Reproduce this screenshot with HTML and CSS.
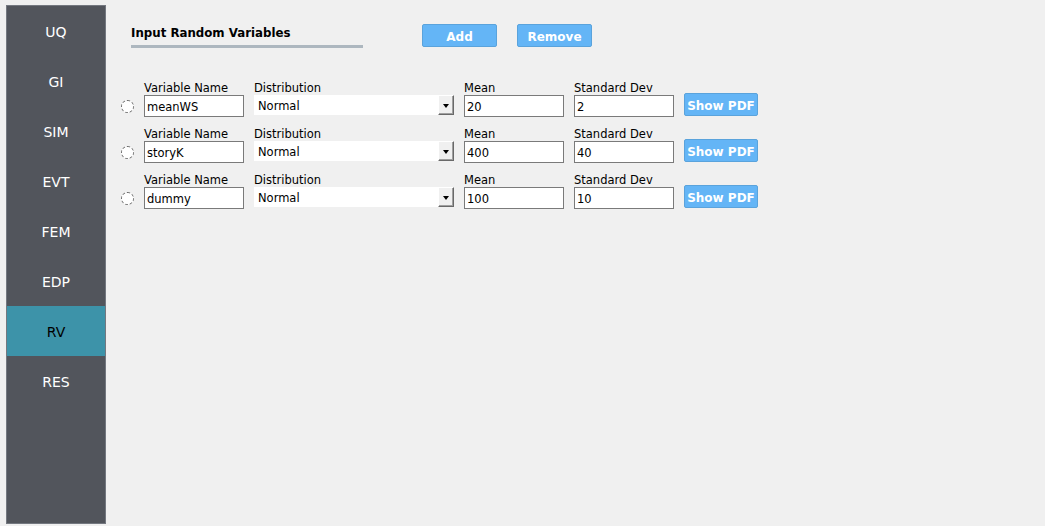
FILE: index.html
```html
<!DOCTYPE html>
<html>
<head>
<meta charset="utf-8">
<link rel="stylesheet" href="styles.css">
</head>
<body>
<nav class="sidebar">
  <div class="nav-item">UQ</div>
  <div class="nav-item">GI</div>
  <div class="nav-item">SIM</div>
  <div class="nav-item">EVT</div>
  <div class="nav-item">FEM</div>
  <div class="nav-item">EDP</div>
  <div class="nav-item active">RV</div>
  <div class="nav-item">RES</div>
</nav>
<main class="main">
  <div class="header">
    <div class="title">Input Random Variables</div>
    <button class="btn btn-add">Add</button>
    <button class="btn btn-remove">Remove</button>
  </div>
  <div class="rows">
    <div class="row">
      <span class="radio"></span>
      <label class="field f-name"><span class="lbl">Variable Name</span><span class="input">meanWS</span></label>
      <label class="field f-dist"><span class="lbl">Distribution</span><span class="combo"><span class="combo-text">Normal</span><span class="combo-btn"><span class="arrow"></span></span></span></label>
      <label class="field f-num"><span class="lbl">Mean</span><span class="input">20</span></label>
      <label class="field f-num"><span class="lbl">Standard Dev</span><span class="input">2</span></label>
      <button class="btn btn-pdf">Show PDF</button>
    </div>
    <div class="row">
      <span class="radio"></span>
      <label class="field f-name"><span class="lbl">Variable Name</span><span class="input">storyK</span></label>
      <label class="field f-dist"><span class="lbl">Distribution</span><span class="combo"><span class="combo-text">Normal</span><span class="combo-btn"><span class="arrow"></span></span></span></label>
      <label class="field f-num"><span class="lbl">Mean</span><span class="input">400</span></label>
      <label class="field f-num"><span class="lbl">Standard Dev</span><span class="input">40</span></label>
      <button class="btn btn-pdf">Show PDF</button>
    </div>
    <div class="row">
      <span class="radio"></span>
      <label class="field f-name"><span class="lbl">Variable Name</span><span class="input">dummy</span></label>
      <label class="field f-dist"><span class="lbl">Distribution</span><span class="combo"><span class="combo-text">Normal</span><span class="combo-btn"><span class="arrow"></span></span></span></label>
      <label class="field f-num"><span class="lbl">Mean</span><span class="input">100</span></label>
      <label class="field f-num"><span class="lbl">Standard Dev</span><span class="input">10</span></label>
      <button class="btn btn-pdf">Show PDF</button>
    </div>
  </div>
</main>
</body>
</html>
```
FILE: styles.css
```css
* { box-sizing: border-box; }
html, body { margin: 0; padding: 0; }
body {
  width: 1045px;
  height: 526px;
  background: #f0f0f0;
  font-family: "DejaVu Sans", Verdana, sans-serif;
  font-size: 11.5px;
  color: #000;
  display: flex;
  align-items: flex-start;
  overflow: hidden;
}
.sidebar {
  margin: 5px 0 0 6px;
  width: 100px;
  height: 519px;
  background: #52555c;
  border: 1px solid #747880;
  display: flex;
  flex-direction: column;
}
.nav-item {
  height: 50px;
  display: flex;
  align-items: center;
  justify-content: center;
  color: #ffffff;
  font-size: 14px;
  padding-top: 1px;
}
.nav-item.active {
  background: #3d93a9;
  color: #000;
}
.main {
  flex: 1;
  padding: 24px 0 0 14px;
}
.header {
  display: flex;
  align-items: flex-start;
  height: 24px;
  margin-left: 11px;
}
.title {
  width: 232px;
  height: 24px;
  border-bottom: 3px solid #adb7bf;
  font-weight: bold;
  font-size: 11.8px;
  padding-top: 2px;
}
.btn {
  font-family: "DejaVu Sans", Verdana, sans-serif;
  font-weight: bold;
  font-size: 12px;
  color: #fff;
  background: #64b5f6;
  border: 1px solid #5aa3dc;
  border-radius: 2px;
  padding: 2px 0 0 0;
  height: 23px;
}
.btn-add { width: 75px; margin-left: 59px; }
.btn-remove { width: 75px; margin-left: 20px; }
.rows {
  margin-top: 32px;
  display: flex;
  flex-direction: column;
  gap: 9px;
}
.row {
  display: flex;
  align-items: flex-end;
  height: 37px;
}
.radio {
  width: 13px;
  height: 13px;
  border: 1px dashed #6a6a6a;
  border-radius: 50%;
  background: #fff;
  margin: 0 10px 4px 1px;
}
.field {
  display: flex;
  flex-direction: column;
  margin-right: 10px;
}
.lbl {
  height: 14px;
  line-height: 14px;
  margin-bottom: 1px;
  white-space: nowrap;
  padding-top: 1px;
}
.input {
  height: 22px;
  border: 1px solid #7a7a7a;
  background: #fff;
  padding: 2px 2px 0;
  line-height: 18px;
}
.f-name { width: 100px; }
.f-num { width: 100px; }
.f-dist { width: 200px; }
.combo {
  height: 20px;
  margin-bottom: 2px;
  background: #fff;
  display: flex;
  align-items: stretch;
}
.combo-text {
  flex: 1;
  padding: 3px 0 0 4px;
  line-height: 17px;
}
.combo-btn {
  width: 16px;
  background: #f0f0f0;
  border-top: 1px solid #fff;
  border-left: 1px solid #fff;
  border-right: 1px solid #696969;
  border-bottom: 1px solid #696969;
  box-shadow: inset -1px -1px 0 #a0a0a0;
  display: flex;
  align-items: center;
  justify-content: center;
}
.arrow {
  width: 0;
  height: 0;
  border-left: 3.5px solid transparent;
  border-right: 3.5px solid transparent;
  border-top: 4px solid #000;
  margin-top: 1px;
}
.btn-pdf {
  width: 74px;
  margin-bottom: 1px;
}
```
